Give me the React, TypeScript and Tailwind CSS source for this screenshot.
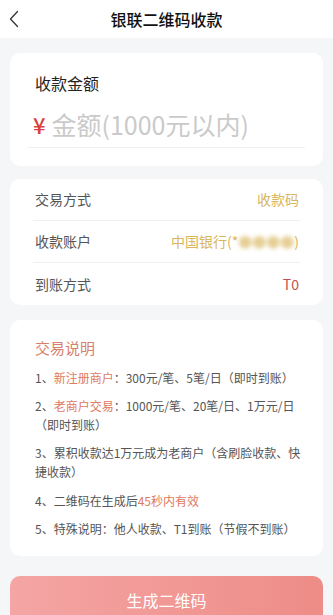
import React from 'react';

const rows = [
  { label: '交易方式', value: <span className="text-[#d9b65c]">收款码</span> },
  {
    label: '收款账户',
    value: (
      <span className="text-[#d9b65c]">
        中国银行(*<span className="inline-block blur-[2px] text-[#e6cf95]">●●●●</span>)
      </span>
    ),
  },
  { label: '到账方式', value: <span className="text-[#c4524c]">T0</span> },
];

export default function App() {
  return (
    <div className="min-h-[615px] bg-[#f5f6f8] font-['Noto_Sans_CJK_SC','Noto_Sans',sans-serif]">
      {/* Header */}
      <div className="relative flex h-[38px] items-center justify-center bg-white">
        <svg className="absolute left-[9px] top-[10px]" width="10" height="18" viewBox="0 0 10 18" fill="none">
          <path d="M8.5 1.5 1.5 9l7 7.5" stroke="#333" strokeWidth="1.3" strokeLinecap="round" strokeLinejoin="round" />
        </svg>
        <h1 className="text-[16px] font-medium leading-[22px] text-[#111]">银联二维码收款</h1>
      </div>

      {/* Amount card */}
      <div className="mx-[10px] mt-[15px] rounded-[10px] bg-white px-[18px] pb-[18px] pt-[19px]">
        <div className="pl-[7px] text-[16px] leading-[22px] text-[#222]">收款金额</div>
        <div className="mt-[15px] flex items-center pl-[5px] leading-[30px]">
          <span className="text-[22px] font-medium text-[#d9413a]">¥</span>
          <span className="ml-[6px] text-[25px] text-[#cacaca]">金额(1000元以内)</span>
        </div>
        <div className="mt-[8px] h-px bg-[#f0f0f0]" />
      </div>

      {/* Info card */}
      <div className="mx-[10px] mt-[13px] rounded-[10px] bg-white px-[23px]">
        {rows.map((row, i) => (
          <div
            key={row.label}
            className={`flex h-[42px] items-center justify-between pl-[2px] pr-[1px] text-[14px] ${
              i < rows.length - 1 ? 'border-b border-[#f1f1f1]' : ''
            }`}
          >
            <span className="text-[#555]">{row.label}</span>
            {row.value}
          </div>
        ))}
      </div>

      {/* Notes card */}
      <div className="mx-[10px] mt-[15px] rounded-[10px] bg-white pb-[18px] pl-[25px] pr-[12px] pt-[18px]">
        <div className="text-[15px] leading-[20px] text-[#d9806a]">交易说明</div>
        <div className="mt-[10px] flex flex-col gap-[9px] whitespace-nowrap text-[12px] leading-[19px] text-[#555]">
          <p>
            1、<span className="text-[#e07a60]">新注册商户</span>：300元/笔、5笔/日（即时到账）
          </p>
          <p>
            2、<span className="text-[#e07a60]">老商户交易</span>：1000元/笔、20笔/日、1万元/日
            <br />
            （即时到账）
          </p>
          <p>
            3、累积收款达1万元成为老商户（含刷脸收款、快
            <br />
            捷收款）
          </p>
          <p className="mt-[1px]">
            4、二维码在生成后<span className="text-[#e07a60]">45秒内有效</span>
          </p>
          <p>5、特殊说明：他人收款、T1到账（节假不到账）</p>
        </div>
      </div>

      {/* Button */}
      <div className="mx-[10px] mt-[20px] pb-[20px]">
        <button className="flex h-[48px] w-full items-center justify-center rounded-[10px] bg-gradient-to-r from-[#f4a5a4] to-[#ee8c87] text-[16px] text-white">
          生成二维码
        </button>
      </div>
    </div>
  );
}
